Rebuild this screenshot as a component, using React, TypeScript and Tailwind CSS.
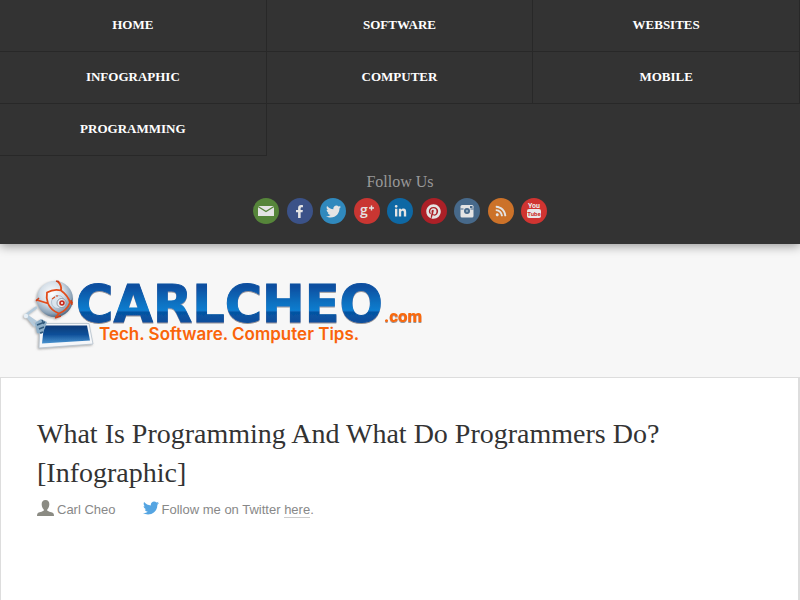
import type { ReactNode } from "react";
import { FaFacebookF, FaLinkedinIn, FaPinterest, FaRss, FaTwitter } from "react-icons/fa";

const NAV = ["Home", "Software", "Websites", "Infographic", "Computer", "Mobile", "Programming"];

function EnvelopeMark() {
  return (
    <svg viewBox="0 0 26 26" className="size-[26px]" aria-hidden="true">
      <path d="M5 8h16v10H5z" fill="#e4e4e4" />
      <path d="m5 8.500 8 5 8-5" fill="none" stroke="#56853a" strokeWidth="1.400" />
    </svg>
  );
}

function GooglePlusMark() {
  return (
    <svg viewBox="0 0 26 26" className="size-[26px]" fill="currentColor" aria-hidden="true">
      <text x="6" y="17" fontSize="14" fontWeight="600" fontFamily="Open Sans, sans-serif">g</text>
      <path d="M15 9.300h5v1.400h-5zM16.800 7.500h1.400v5h-1.400z" />
    </svg>
  );
}

function CameraMark() {
  return (
    <svg viewBox="0 0 26 26" className="size-[26px]" aria-hidden="true">
      <rect x="6.500" y="7" width="13" height="12.500" rx="1.500" fill="#e4e4e4" />
      <path d="M6.500 10.500h3v1h-3zM16.500 10.500h3v1h-3zM16 8h2.500v2H16z" fill="#47698a" />
      <circle cx="13" cy="13" r="3" fill="#47698a" />
      <circle cx="13" cy="13" r="1.200" fill="#8fa8bb" />
    </svg>
  );
}

function YouTubeMark() {
  return (
    <svg viewBox="0 0 26 26" className="size-[26px]" aria-hidden="true">
      <text x="13" y="10" textAnchor="middle" fontSize="7" fontWeight="700" fill="#eee" fontFamily="Roboto, sans-serif">You</text>
      <rect x="6" y="11" width="14" height="9" rx="2" fill="#e8e8e8" />
      <text x="13" y="18" textAnchor="middle" fontSize="6" fontWeight="700" fill="#cc3330" fontFamily="Roboto, sans-serif">Tube</text>
    </svg>
  );
}

const SOCIAL: { label: string; color: string; icon: ReactNode }[] = [
  { label: "Email", color: "bg-[#56853a]", icon: <EnvelopeMark /> },
  { label: "Facebook", color: "bg-[#3b5288]", icon: <FaFacebookF className="size-[13px]" /> },
  { label: "Twitter", color: "bg-[#3089bd]", icon: <FaTwitter className="size-[15px]" /> },
  { label: "Google Plus", color: "bg-[#c93632]", icon: <GooglePlusMark /> },
  { label: "LinkedIn", color: "bg-[#0e68a4]", icon: <FaLinkedinIn className="size-[13px]" /> },
  { label: "Pinterest", color: "bg-[#ac2027]", icon: <FaPinterest className="size-[15px]" /> },
  { label: "Instagram", color: "bg-[#47698a]", icon: <CameraMark /> },
  { label: "RSS", color: "bg-[#cc7229]", icon: <FaRss className="size-[12px]" /> },
  { label: "YouTube", color: "bg-[#d03431]", icon: <YouTubeMark /> },
];

function Logo() {
  return (
    <svg viewBox="0 0 410 80" className="h-20 w-[410px]" role="img" aria-label="CarlCheo.com">
      <defs>
        <linearGradient id="blue" x1="0" y1="0" x2="0" y2="1">
          <stop offset="0.2" stopColor="#0a4fa0" />
          <stop offset="0.48" stopColor="#0b72c2" />
          <stop offset="0.6" stopColor="#0a7ccf" />
          <stop offset="0.63" stopColor="#0554a3" />
          <stop offset="0.8" stopColor="#0a4f9c" />
        </linearGradient>
        <radialGradient id="ball" cx="0.42" cy="0.35" r="0.65">
          <stop offset="0" stopColor="#ffffff" />
          <stop offset="0.5" stopColor="#d5dfe8" />
          <stop offset="0.85" stopColor="#8ba2b7" />
          <stop offset="1" stopColor="#566f88" />
        </radialGradient>
        <linearGradient id="screen" x1="0" y1="0" x2="0" y2="1">
          <stop offset="0" stopColor="#0b3977" />
          <stop offset="0.5" stopColor="#0f5099" />
          <stop offset="1" stopColor="#4a94d0" />
        </linearGradient>
        <filter id="soft" x="-20%" y="-20%" width="140%" height="140%">
          <feDropShadow dx="-1" dy="1" stdDeviation="1.200" floodColor="#777" floodOpacity="0.6" />
        </filter>
        <filter id="edge" x="-5%" y="-5%" width="110%" height="120%">
          <feDropShadow dx="0" dy="1" stdDeviation="0.500" floodColor="#555" floodOpacity="0.6" />
        </filter>
      </defs>
      <g filter="url(#soft)">
        <path d="M17 31 6 39l9 11M6 39l13 9" fill="none" stroke="#b4cadb" strokeWidth="2.500" strokeLinejoin="round" />
        <circle cx="6" cy="40" r="2.200" fill="#e6eff6" />
        <path d="M20 47.500h49l4 20.500-54 4z" fill="#f5f7fa" stroke="#b5c2cd" strokeWidth="0.800" />
        <path d="M24 49.500h43l3 15-48 3z" fill="url(#screen)" />
        <path d="m15 47 6-4 6 3-2 6-3 6-5-1z" fill="#8fb0c9" />
        <path d="m17 49 8-3M19 53l5-2M20 57l3-1M22 44l2 4" stroke="#315a7d" strokeWidth="1.500" />
        <circle cx="35" cy="23" r="18" fill="url(#ball)" />
        <path d="M38 5.500q4 4 3 9M41 14.500q7 5 9 12l2 0M50 26.500q-3 8-11 11l-3 3.500M39 37.500q-8-3-11-10l-11-3.500M28 27.500q-2-6-1-11 7-4 14-2" fill="none" stroke="#e24d1b" strokeWidth="1.800" strokeLinecap="round" />
        <path d="m16 25 3-3M35 42l6-2M36 5l3 1M51 24l1 5" stroke="#c9401a" strokeWidth="1.500" />
        <circle cx="38" cy="26" r="6.500" fill="#dbe5ed" stroke="#9eb0c1" strokeWidth="0.700" />
        <path d="m32 23 3-2M36 20h2" fill="none" stroke="#e24d1b" strokeWidth="1.200" />
        <circle cx="41.500" cy="27" r="4.500" fill="#eef2f5" stroke="#7b8796" strokeWidth="0.800" />
        <circle cx="42" cy="27" r="2.800" fill="#c52f20" />
        <circle cx="42" cy="27" r="1" fill="#fff" />
      </g>
      <text x="56" y="46" fontSize="51" fontWeight="700" fontFamily="DejaVu Sans, sans-serif" fill="url(#blue)" stroke="url(#blue)" filter="url(#edge)">CARLCHEO</text>
      <text x="364" y="46" fontSize="17" fontWeight="900" fontFamily="Roboto, sans-serif" fill="#f96b0c" filter="url(#edge)">.com</text>
      <text x="79" y="64" fontSize="17" fontWeight="600" fontFamily="Inter, sans-serif" fill="#fa640a">Tech. Software. Computer Tips.</text>
    </svg>
  );
}

export default function App() {
  return (
    <div className="flex min-h-screen flex-col bg-[#f7f7f7] font-['Liberation_Serif',serif]">
      <header className="bg-[#333] pb-5 shadow-[0_2px_10px_rgba(0,0,0,0.4)]">
        <nav className="grid grid-cols-3">
          {NAV.map((item) => (
            <a key={item} href="#" className="flex h-[52px] items-center justify-center border-r border-b border-[#282828] pb-0.5 text-[13px] leading-5 font-bold text-white uppercase">
              {item}
            </a>
          ))}
        </nav>
        <div className="flex flex-col items-center gap-1 pt-4">
          <p className="pb-0.5 text-base leading-5 text-[#999]">Follow Us</p>
          <ul className="flex w-[294px] justify-between">
            {SOCIAL.map(({ label, color, icon }) => (
              <li key={label}>
                <a href="#" aria-label={label} className={`flex size-[26px] items-center justify-center rounded-full text-[#e4e4e4] ${color}`}>
                  {icon}
                </a>
              </li>
            ))}
          </ul>
        </div>
      </header>
      <div className="px-5 pt-8 pb-[21px]">
        <a href="#" className="inline-block align-top">
          <Logo />
        </a>
      </div>
      <main className="flex-1 border-t border-r-2 border-l border-[#ddd] bg-white px-9 pt-9">
        <h1 className="text-[28px] leading-[39px] text-[#333]">What Is Programming And What Do Programmers Do? [Infographic]</h1>
        <div className="mt-2 flex gap-[27px] font-['Liberation_Sans',sans-serif] text-[13px] leading-5 text-[#888]">
          <span className="flex items-start gap-[3px]">
            <svg viewBox="0 0 17 16" className="h-4 w-[17px]" fill="#8b8b83" aria-hidden="true">
              <path d="M8.500 0C5.700 0 4.500 2 4.700 4.500c.1 2 .8 3.800 2 4.800v1.500c-1 .9-5.200 1.300-6.200 2.700-.4.600-.5 1.600-.5 2.500h17c0-.9-.1-1.900-.5-2.500-1-1.400-5.200-1.800-6.200-2.700V9.300c1.200-1 1.900-2.800 2-4.800C12.500 2 11.300 0 8.500 0z" />
            </svg>
            Carl Cheo
          </span>
          <span className="flex items-start gap-[3px]">
            <FaTwitter className="size-4 text-[#55a5e2]" aria-hidden="true" />
            <span>
              Follow me on Twitter <a href="#" className="border-b border-[#ccc]">here</a>.
            </span>
          </span>
        </div>
      </main>
    </div>
  );
}
